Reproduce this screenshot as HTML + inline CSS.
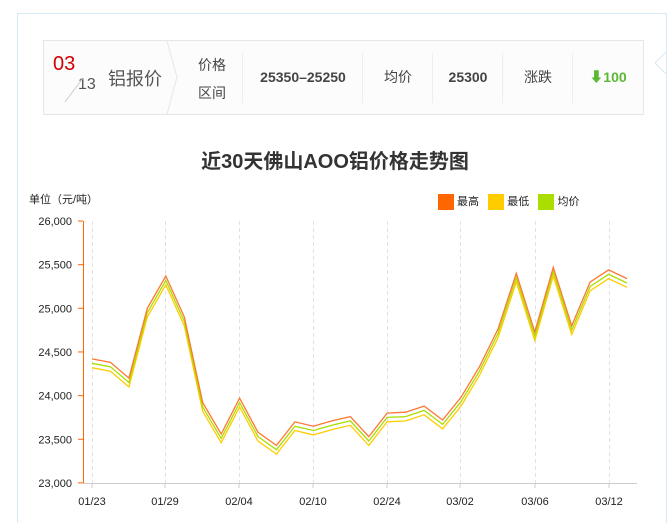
<!DOCTYPE html><html><head><meta charset="utf-8"><style>
html,body{margin:0;width:670px;height:523px;overflow:hidden}
body{background:#fff;font-family:"Liberation Sans","Noto Sans CJK SC",sans-serif;position:relative}
.outer{position:absolute;left:17px;top:13px;width:648px;height:510px;border:1px solid #d6eaf5;border-bottom:none}
.bar{position:absolute;left:43px;top:40px;width:599px;height:73px;border:1px solid #e6e6e6;background:#fcfcfc}
.c{position:absolute;top:0;height:73px;line-height:73px;font-size:14px;color:#444;text-align:center}
.d{position:absolute;top:12px;width:1px;height:50px;background:#eee}
</style></head><body>
<div class="outer"></div>
<div class="bar">
<div style="position:absolute;left:9px;top:12px;font-size:20px;color:#d20000">03</div>
<div style="position:absolute;left:34px;top:35px;font-size:16px;color:#555">13</div>
<svg style="position:absolute;left:20px;top:36px" width="20" height="26"><line x1="1" y1="25" x2="19" y2="1" stroke="#ccc"/></svg>
<div style="position:absolute;left:64px;top:24px;font-size:18px;color:#555">铝报价</div>
<svg style="position:absolute;left:122px;top:0" width="14" height="73"><polyline points="1,0 11,36 1,73" fill="none" stroke="#e6e6e6"/></svg>
<div style="position:absolute;left:154px;top:10px;font-size:14px;color:#444;line-height:28px">价格<br>区间</div>
<div class="d" style="left:198px"></div>
<div class="c" style="left:199px;width:120px;font-weight:bold;font-size:14px">25350–25250</div>
<div class="d" style="left:318px"></div>
<div class="c" style="left:319px;width:70px">均价</div>
<div class="d" style="left:388px"></div>
<div class="c" style="left:389px;width:70px;font-weight:bold;font-size:14px">25300</div>
<div class="d" style="left:458px"></div>
<div class="c" style="left:459px;width:70px">涨跌</div>
<div class="d" style="left:528px"></div>
<div class="c" style="left:529px;width:70px;color:#5bb832;font-weight:bold;font-size:14px">⬇100</div>
</div>
<svg style="position:absolute;left:655px;top:52px" width="15" height="22"><polyline points="11,0 0,11 11,22" fill="#fff" stroke="#d6eaf5"/></svg>
<div style="position:absolute;left:0;width:670px;top:145px;text-align:center;font-size:20px;font-weight:bold;color:#333">近30天佛山AOO铝价格走势图</div>
<div style="position:absolute;left:29px;top:191px;font-size:11px;color:#222">单位（元/吨）</div>
<div style="position:absolute;left:438px;top:193px;font-size:11px;color:#222">
<span style="display:inline-block;width:16px;height:16px;background:#ff6600;vertical-align:middle"></span> 最高&nbsp;&nbsp;
<span style="display:inline-block;width:16px;height:16px;background:#ffcc00;vertical-align:middle"></span> 最低&nbsp;&nbsp;
<span style="display:inline-block;width:16px;height:16px;background:#aadd00;vertical-align:middle"></span> 均价</div>
<svg id="ch" style="position:absolute;left:0;top:0" width="670" height="523" font-family="Liberation Sans,sans-serif" font-size="11"></svg>
<script>
var s='',ys=[26000,25500,25000,24500,24000,23500,23000];
function Y(v){return 221+(26000-v)*0.0873}
ys.forEach(function(v){var y=Y(v);s+='<text x="72" y="'+(y+4)+'" text-anchor="end" fill="#222">'+(v+'').replace(/(\d\d)(\d\d\d)/,'$1,$2')+'</text><line x1="78" y1="'+y+'" x2="83" y2="'+y+'" stroke="#ff6600"/>';});
var xl=[[92,'01/23'],[165,'01/29'],[239,'02/04'],[313,'02/10'],[387,'02/24'],[460,'03/02'],[535,'03/06'],[609,'03/12']];
xl.forEach(function(a){s+='<line x1="'+(a[0]+.5)+'" y1="221" x2="'+(a[0]+.5)+'" y2="483" stroke="#e2e2e2" stroke-dasharray="4,3"/><line x1="'+a[0]+'" y1="483" x2="'+a[0]+'" y2="488" stroke="#ccc"/><text x="'+a[0]+'" y="505" text-anchor="middle" fill="#222">'+a[1]+'</text>';});
s+='<line x1="83" y1="483.5" x2="637" y2="483.5" stroke="#ccc"/><line x1="83.5" y1="221" x2="83.5" y2="483" stroke="#ff6600"/>';
var d=[24420,24380,24200,25000,25370,24900,23920,23560,23970,23580,23430,23700,23650,23710,23760,23530,23800,23810,23880,23720,23980,24330,24760,25400,24730,25470,24800,25300,25440,25340];
function pl(o,c){var p=d.map(function(v,i){return (92+i*18.45).toFixed(1)+','+Y(v-o).toFixed(1)}).join(' ');return '<polyline points="'+p+'" fill="none" stroke="'+c+'" stroke-width="1.3"/>';}
s+=pl(100,'#ffcc00')+pl(50,'#aadd00')+pl(0,'#ff7733');
document.getElementById('ch').innerHTML=s;
</script>
</body></html>
